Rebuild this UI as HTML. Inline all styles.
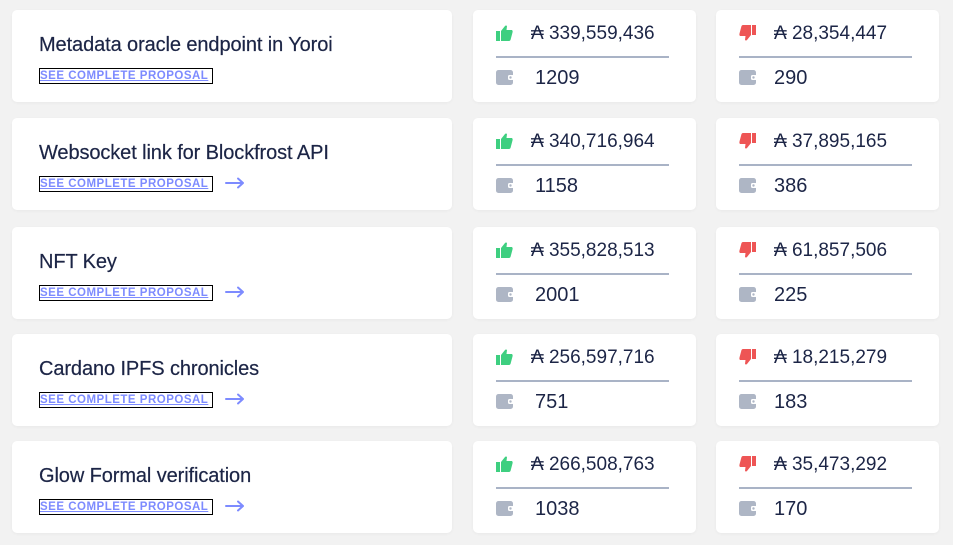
<!DOCTYPE html>
<html><head><meta charset="utf-8"><style>
*{margin:0;padding:0;box-sizing:border-box}
body{width:953px;height:545px;background:#f2f2f2;font-family:"Liberation Sans",sans-serif;color:#1c2546;position:relative;overflow:hidden}
.c{position:absolute;background:#fff;border-radius:5px;box-shadow:0 1px 3px rgba(0,0,0,.04)}
.l{left:12px;width:440px;height:92px}
.m{left:473px;width:223px;height:92px}
.r{left:716px;width:223px;height:92px}
.t{position:absolute;left:27px;top:24px;font-size:20px;white-space:nowrap;letter-spacing:-.1px;-webkit-text-stroke:.2px #1c2546}
.a{position:absolute;left:27px;top:58px;width:174px;height:16px;border:1.5px solid #000;font-size:11.5px;font-weight:bold;color:#7d8bff;text-decoration:underline;letter-spacing:.5px;line-height:15px;white-space:nowrap;overflow:hidden}
.ar{position:absolute;left:213px;top:59px}
.ic{position:absolute;left:23px;top:15px}
.amt{position:absolute;left:58px;top:13px;font-size:19px;white-space:nowrap}
.hr{position:absolute;left:23px;top:46px;width:173px;height:1.5px;background:#a9b3c6}
.wi{position:absolute;left:23px;top:60px}
.n{position:absolute;left:62px;top:57px;font-size:20px}
.r .n{left:58px}
</style></head><body>
<script>
var rows=[
["Metadata oracle endpoint in Yoroi","339,559,436","1209","28,354,447","290",false],
["Websocket link for Blockfrost API","340,716,964","1158","37,895,165","386",true],
["NFT Key","355,828,513","2001","61,857,506","225",true],
["Cardano IPFS chronicles","256,597,716","751","18,215,279","183",true],
["Glow Formal verification","266,508,763","1038","35,473,292","170",true]];
var tops=[10,118,227,334,441];
var up='<svg class="ic" width="17" height="16" viewBox="0 0 17 16"><rect x="0" y="6" width="4" height="10" fill="#3ecf80"/><path d="M5 6 L9 1 Q10 0 11 1 L10.5 5 H16 Q17 6 16.5 7.5 L14.5 15 Q14 16 13 16 H5 Z" fill="#3ecf80"/></svg>';
var dn='<svg class="ic" width="17" height="16" viewBox="0 0 17 16"><rect x="13" y="0" width="4" height="10" fill="#ee5555"/><path d="M12 10 L8 15 Q7 16 6 15 L6.5 11 H1 Q0 10 0.5 8.5 L2.5 1 Q3 0 4 0 H12 Z" fill="#ee5555"/></svg>';
var w='<svg class="wi" width="18" height="15" viewBox="0 0 18 15"><rect x="0" y="0" width="17" height="15" rx="2.5" fill="#aeb6c5"/><rect x="12" y="5" width="6" height="5" rx="1.5" fill="#fff"/><circle cx="14.5" cy="7.5" r="1.2" fill="#aeb6c5"/></svg>';
var arr='<svg class="ar" width="20" height="12" viewBox="0 0 20 12"><path d="M1 6 H18 M13 1.5 L18 6 L13 10.5" stroke="#7d8bff" stroke-width="2" fill="none" stroke-linecap="round" stroke-linejoin="round"/></svg>';
var h='';
rows.forEach(function(r,i){var t=tops[i];
h+='<div class="c l" style="top:'+t+'px"><div class="t">'+r[0]+'</div><div class="a">SEE COMPLETE PROPOSAL</div>'+(r[5]?arr:'')+'</div>';
h+='<div class="c m" style="top:'+t+'px">'+up+'<div class="amt">&#8371; '+r[1]+'</div><div class="hr"></div>'+w+'<div class="n">'+r[2]+'</div></div>';
h+='<div class="c r" style="top:'+t+'px">'+dn+'<div class="amt">&#8371; '+r[3]+'</div><div class="hr"></div>'+w+'<div class="n">'+r[4]+'</div></div>';});
document.write(h);
</script>
</body></html>
